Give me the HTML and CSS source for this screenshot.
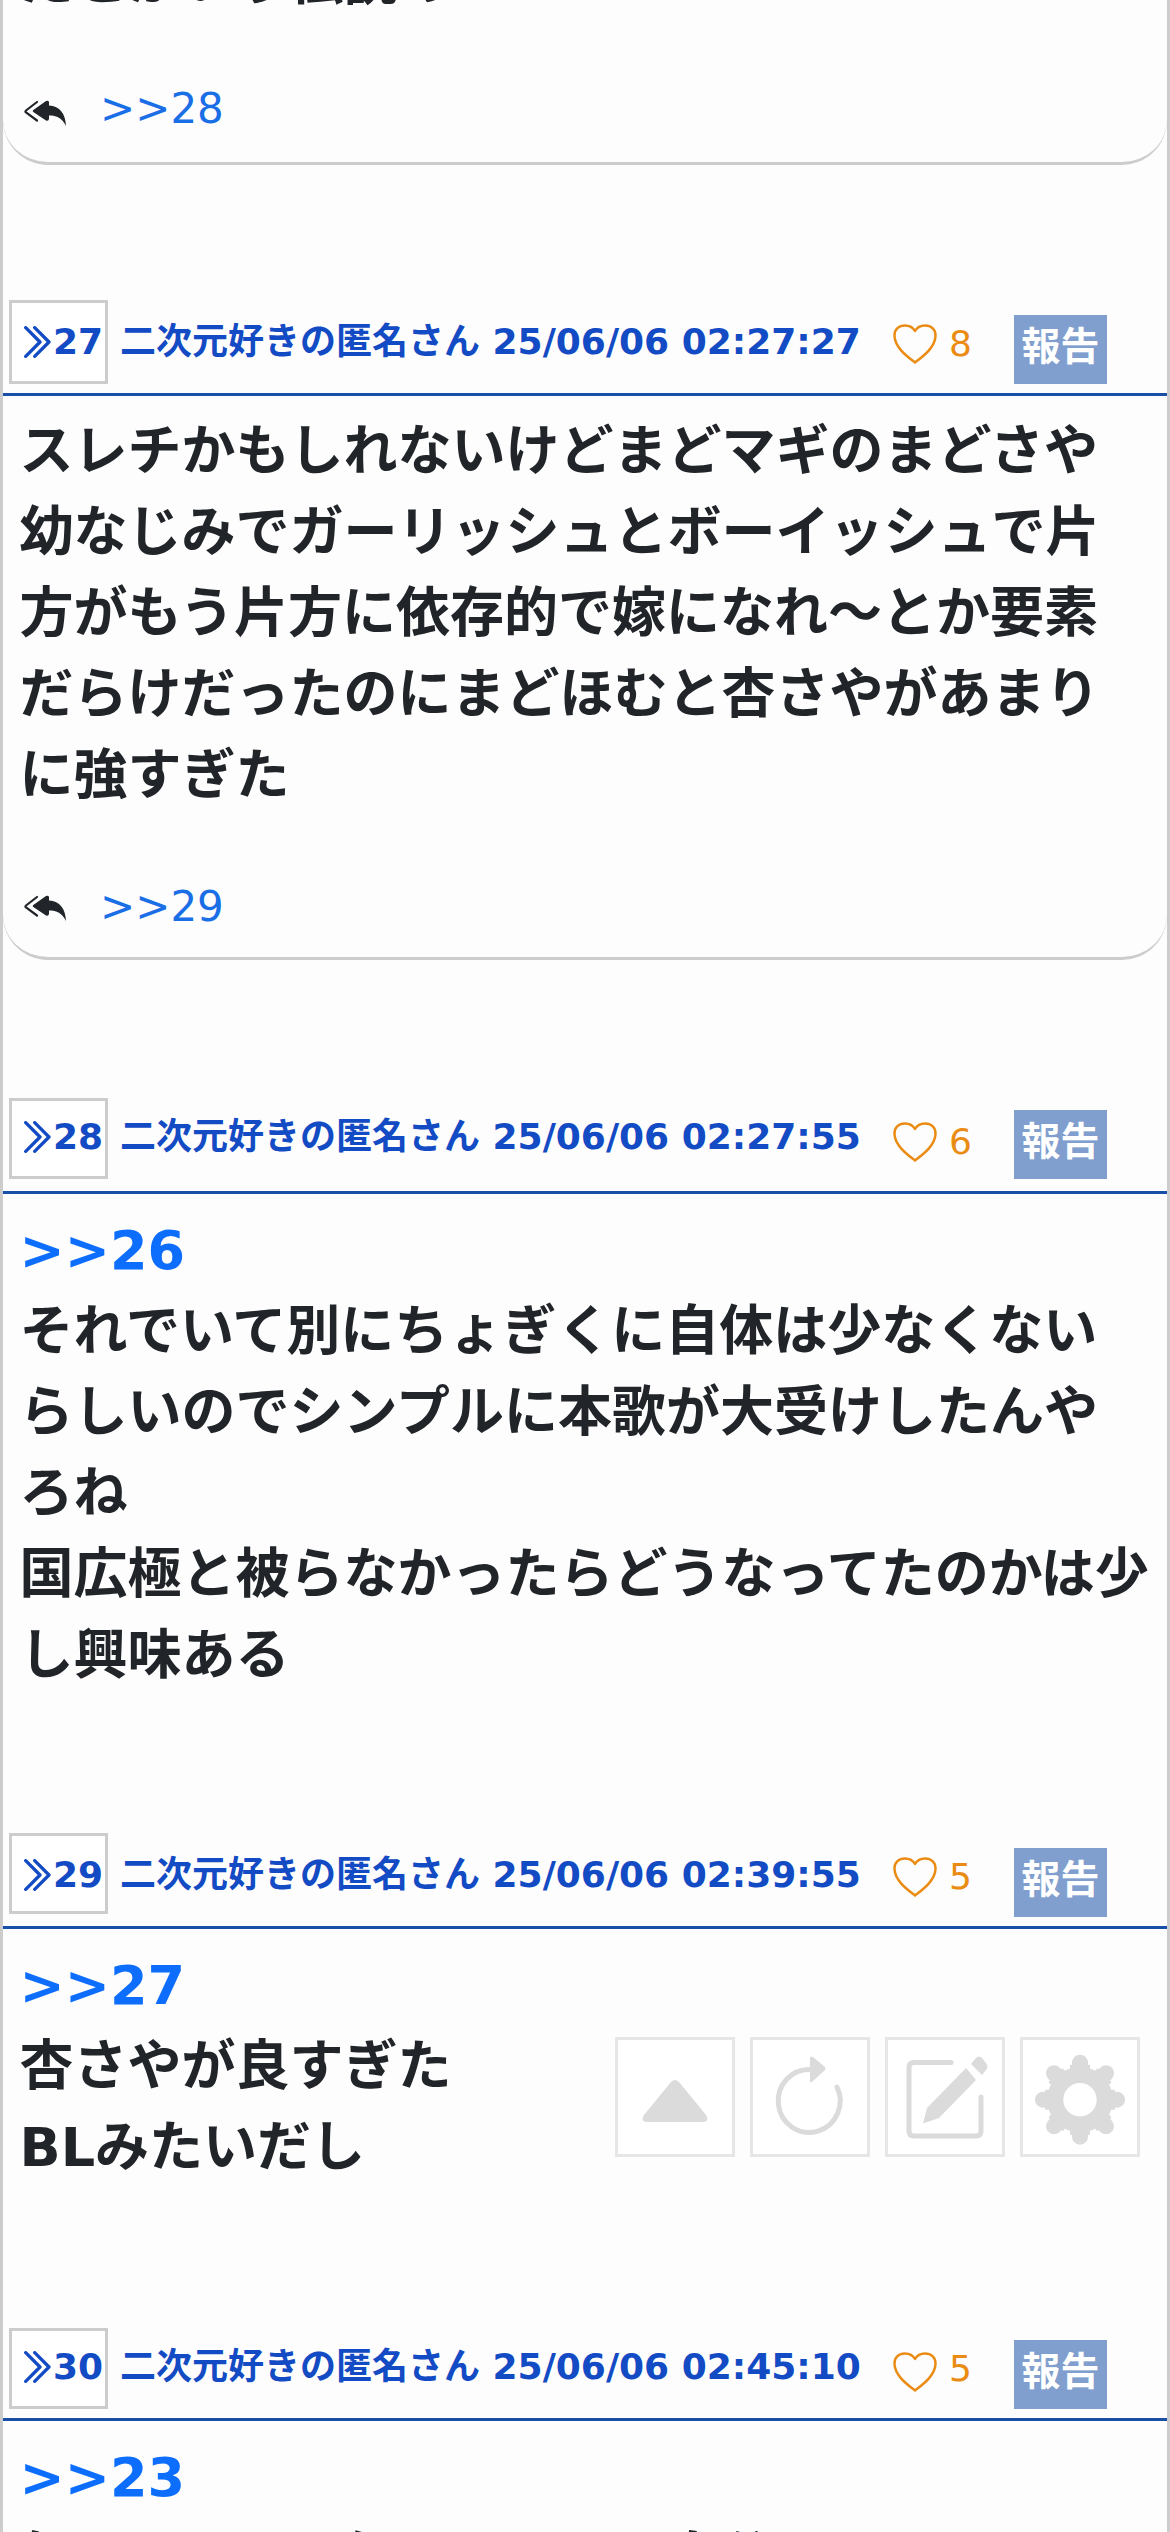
FILE: index.html
```
<!DOCTYPE html>
<html lang="ja">
<head>
<meta charset="utf-8">
<title>スレッド</title>
<link rel="stylesheet" href="styles.css">
</head>
<body>
<svg width="0" height="0" class="defs">
  <symbol id="chev" viewBox="0 0 27 32"><path d="M1.700 1.700L16 16L1.700 30.300M10.700 1.700L25 16L10.700 30.300" fill="none" stroke="currentColor" stroke-width="3.300" stroke-linecap="round" stroke-linejoin="round"/></symbol>
  <symbol id="heart" viewBox="0 0 44 40"><path d="M22 38.500C15 33 2 24 1.500 12C1.300 5 6 1.500 12 1.500C17 1.500 20 3.500 22 7C24 3.500 27 1.500 32 1.500C38 1.500 42.700 5 42.500 12C42 24 29 33 22 38.500Z" fill="none" stroke="currentColor" stroke-width="2.500" stroke-linejoin="round"/></symbol>
  <symbol id="reply" viewBox="0 0 44 26"><path d="M13 2L2 10.500Q.8 11.500 2 12.500L13 20.500" fill="none" stroke="currentColor" stroke-width="2.200" stroke-linecap="round"/><path d="M9.300 10L22 1Q24.500 0 25 2V5.500C36 6 41.500 14 42 26C38 18 33 15.500 25 15.500V19Q24.500 21.500 22 20.500L9.300 12Q8 11 9.300 10Z" fill="currentColor"/></symbol>
</svg>
<main class="thread">
  <article class="post card first">
    <div class="text">たとかいう伝説の</div>
    <div class="replies"><svg class="reply"><use href="#reply"/></svg><a>&gt;&gt;28</a></div>
  </article>
  <article class="post card p27">
    <header><span class="num"><svg class="chev"><use href="#chev"/></svg>27</span><span class="name">二次元好きの匿名さん 25/06/06 02:27:27</span><span class="like"><svg class="heart"><use href="#heart"/></svg>8</span><span class="report">報告</span></header>
    <div class="text">スレチかもしれないけどまどマギのまどさや<br>幼なじみでガーリッシュとボーイッシュで片<br>方がもう片方に依存的で嫁になれ～とか要素<br>だらけだったのにまどほむと杏さやがあまり<br>に強すぎた</div>
    <div class="replies"><svg class="reply"><use href="#reply"/></svg><a>&gt;&gt;29</a></div>
  </article>
  <article class="post p28">
    <header><span class="num"><svg class="chev"><use href="#chev"/></svg>28</span><span class="name">二次元好きの匿名さん 25/06/06 02:27:55</span><span class="like"><svg class="heart"><use href="#heart"/></svg>6</span><span class="report">報告</span></header>
    <div class="text"><a>&gt;&gt;26</a><br>それでいて別にちょぎくに自体は少なくない<br>らしいのでシンプルに本歌が大受けしたんや<br>ろね<br>国広極と被らなかったらどうなってたのかは少<br>し興味ある</div>
  </article>
  <article class="post p29">
    <header><span class="num"><svg class="chev"><use href="#chev"/></svg>29</span><span class="name">二次元好きの匿名さん 25/06/06 02:39:55</span><span class="like"><svg class="heart"><use href="#heart"/></svg>5</span><span class="report">報告</span></header>
    <div class="text"><a>&gt;&gt;27</a><br>杏さやが良すぎた<br>BLみたいだし</div>
  </article>
  <article class="post p30">
    <header><span class="num"><svg class="chev"><use href="#chev"/></svg>30</span><span class="name">二次元好きの匿名さん 25/06/06 02:45:10</span><span class="like"><svg class="heart"><use href="#heart"/></svg>5</span><span class="report">報告</span></header>
    <div class="text"><a>&gt;&gt;23</a><br>気にしている保ちつつたい自分にしまいた</div>
  </article>
</main>
<nav class="tools">
  <button><svg viewBox="0 0 114 114"><path d="M53 42Q57 38 61 42L88 75Q92 82 85 82H29Q22 82 26 75Z"/></svg></button>
  <button><svg viewBox="0 0 114 114"><path d="M58 29.500A31 31.500 0 1 0 84 47" class="line"/><path d="M57 18V42Q58 43 60 41L72 30Q73 29 72 27L60 17Q58 15.500 57 18Z"/></svg></button>
  <button><svg viewBox="0 0 114 114"><path d="M63 22.500H26Q21 22.500 21 27.500V91Q21 96 26 96H88Q93 96 93 91V57" class="line"/><path d="M78 28L88 40L51 78L35 83.500L39 68ZM83 24L88 18Q91 15 94 18L98 23Q101 27 98 30L94 35Z"/></svg></button>
  <button><svg viewBox="0 0 114 114"><g transform="translate(57 59.700)" class="gear"><circle r="24.700"/><path d="M0-25V-37M0 25V37M-25 0H-37M25 0H37M18-18L26-26.500M-18-18L-26-26.500M18 18L26 26.500M-18 18L-26 26.500"/><path class="base" d="M0-25V-35M0 25V35M-25 0H-35M25 0H35M18-18L24.500-24.500M-18-18L-24.500-24.500M18 18L24.500 24.500M-18 18L-24.500 24.500"/></g></svg></button>
</nav>
</body>
</html>
```
FILE: styles.css
```
* { box-sizing: border-box; }
body { margin: 0; background: #fdfdfd; font-family: "DejaVu Sans", "Noto Sans CJK JP", sans-serif; color: #212529; }
.defs { position: absolute; }
.thread { height: 2532px; overflow: hidden; border: solid #ccc; border-width: 0 3px; }
.text { padding: 16px 0 0 16.5px; font-weight: 700; font-size: 54px; line-height: 81px; white-space: nowrap; }
.text a { color: #0d6efd; }
.card { display: flex; flex-direction: column; border-bottom: 3px solid #ccc; border-radius: 0 0 45px 45px; }
.first { height: 165px; padding-bottom: 23px; }
.first .text { margin-top: -75px; }
.replies { display: flex; align-items: center; height: 60px; margin-top: auto; padding-left: 21px; gap: 32px; font-size: 42px; line-height: 60px; }
.replies a { color: #1a6ee6; }
.reply { width: 44px; height: 26px; margin-top: 2px; }
.first .reply { margin-top: 7px; }
header { display: flex; align-items: flex-start; flex: none; height: 96px; border-bottom: 3px solid #1a4fa8; color: #124bc4; font-size: 36px; line-height: 54px; padding-left: 6px; }
.num { display: flex; width: 99px; height: 81px; border: 3px solid #ccc; background: #fff; padding: 12px 0 0 12px; font-weight: 700; }
.chev { width: 27px; height: 32px; margin: 11px 2px 0 0; }
.name { font-weight: 700; margin: 15px 0 0 12px; width: 773px; white-space: nowrap; }
.like { display: flex; width: 121px; margin-top: 17px; color: #ea8c14; }
.heart { width: 44px; height: 40px; margin: 7px 12px 0 0; }
.report { width: 93px; height: 69px; margin-top: 15px; background: #809fce; color: #fff; font-size: 39px; font-weight: 700; text-align: center; line-height: 64px; }
.p27 { margin-top: 135px; height: 660px; padding-bottom: 20px; }
.p27 .num { height: 84px; }
.p27 .text { padding-top: 15px; }
.p28 { margin-top: 138px; height: 735px; }
.p29 { height: 495px; }
.p28 .num, .p30 .num { padding-top: 9px; }
.p28 .name, .p28 .report, .p30 .name, .p30 .report { margin-top: 12px; }
.p30 header { height: 93px; }
.p30 .like { margin-top: 14px; }
.p30 .heart { margin-top: 10px; }
.tools { position: fixed; left: 615px; top: 2037px; display: flex; gap: 15px; }
.tools button { width: 120px; height: 120px; padding: 0; border: 3px solid #e6e6e6; background: #fff; }
.tools svg { display: block; width: 114px; height: 114px; fill: #dbdbdb; }
.tools .line { fill: none; stroke: #dbdbdb; stroke-width: 5; stroke-linecap: round; }
.gear { fill: none; stroke: #dbdbdb; stroke-width: 16; stroke-linecap: round; }
.gear .base { stroke-width: 20; stroke-linecap: butt; }
```
